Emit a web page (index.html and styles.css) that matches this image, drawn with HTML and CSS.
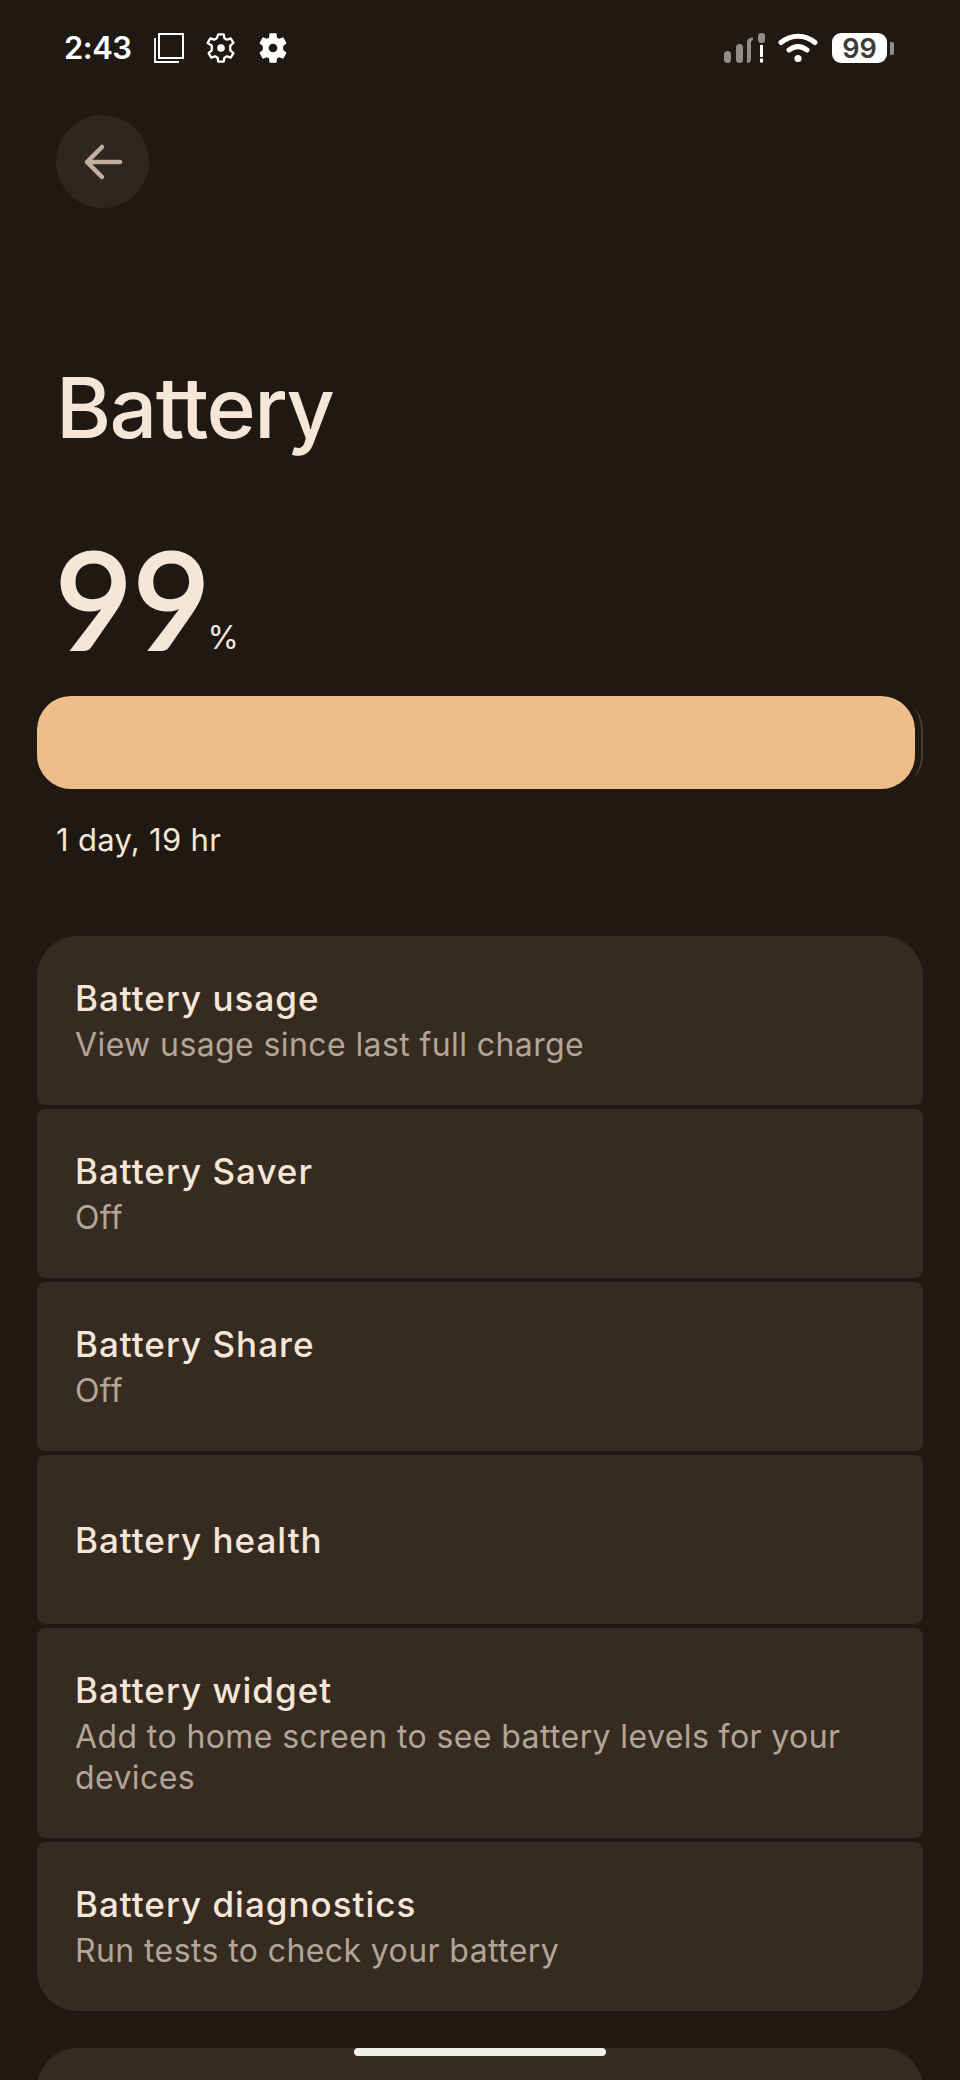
FILE: index.html
```html
<!DOCTYPE html>
<html lang="en">
<head>
<meta charset="utf-8">
<title>Battery</title>
<link rel="stylesheet" href="styles.css">
</head>
<body>
<div class="screen">
  <header class="status">
    <div class="status-left">
      <span class="time">2:43</span>
      <svg class="ic" width="30" height="30" viewBox="0 0 30 30" fill="none" stroke="#fff" stroke-width="2"><rect x="5" y="1" width="24" height="24"/><path d="M1 5v24h24" stroke-width="1.8"/></svg>
      <svg class="ic" width="30" height="30" viewBox="1 1 22 22"><path fill="none" stroke="#fff" stroke-width="1.700" stroke-linejoin="round" d="M10 2h4l.5 2.900 1.800 1 2.800-1 2 3.400-2.300 1.900v3.600l2.300 1.900-2 3.400-2.800-1-1.800 1-.5 2.900h-4l-.5-2.900-1.800-1-2.800 1-2-3.400 2.300-1.900v-3.600L2.200 8.300l2-3.400 2.800 1 1.800-1z"/><circle cx="12" cy="12" r="2.800" fill="#fff"/></svg>
      <svg class="ic" width="30" height="30" viewBox="1 1 22 22"><path fill="#fff" fill-rule="evenodd" d="M9.500 1.200h5l.5 3.200 1.500.9 3-1.100 2.500 4.300-2.500 2v3l2.500 2-2.500 4.300-3-1.100-1.500.9-.5 3.200h-5l-.5-3.200-1.500-.9-3 1.100-2.500-4.300 2.500-2v-3l-2.500-2 2.500-4.300 3 1.100 1.500-.9zM12 8.800a3.200 3.200 0 1 0 0 6.400 3.200 3.200 0 0 0 0-6.400z"/></svg>
    </div>
    <div class="status-right">
      <svg class="signal" width="42" height="31" viewBox="0 0 42 31"><g fill="#8f8d88"><rect x="0" y="18" width="7" height="12" rx="3.500"/><rect x="12" y="11" width="7" height="19" rx="3.500"/><path d="M23 27V9c0-3 2-4.500 6-4.500v2.500c-1.500.5-2 1.500-2 3v16c0 2.500-1 4-4 4z"/><rect x="34" y="0" width="7" height="10" rx="3"/></g><rect x="36" y="12" width="3" height="12" fill="#fff"/><rect x="36" y="25.500" width="3" height="4" fill="#fff"/></svg>
      <svg class="wifi" width="40" height="30" viewBox="0 0 40 30" fill="none" stroke="#fff" stroke-width="5" stroke-linecap="round"><path d="M3 9.500c10-8.500 24-8.500 34 0"/><path d="M11 17c6-4.500 12-4.500 18 0"/><circle cx="20" cy="25.500" r="3.600" fill="#fff" stroke="none"/></svg>
      <div class="batt"><span class="batt-num">99</span></div>
      <span class="batt-cap"></span>
    </div>
  </header>

  <button class="back" aria-label="Back">
    <svg width="44" height="44" viewBox="0 0 44 44" fill="none" stroke="#c4aea2" stroke-width="4.500" stroke-linecap="round" stroke-linejoin="round"><path d="M39 22H6M21 7 6 22l15 15"/></svg>
  </button>

  <h1 class="title">Battery</h1>

  <div class="level"><span class="num">99</span><span class="pct">%</span></div>

  <div class="bar"><div class="fill"></div></div>

  <p class="remain">1 day, 19 hr</p>

  <div class="list">
    <div class="item first"><div class="name">Battery usage</div><div class="sub">View usage since last full charge</div></div>
    <div class="item"><div class="name">Battery Saver</div><div class="sub">Off</div></div>
    <div class="item"><div class="name">Battery Share</div><div class="sub">Off</div></div>
    <div class="item"><div class="name">Battery health</div></div>
    <div class="item"><div class="name">Battery widget</div><div class="sub">Add to home screen to see battery levels for your devices</div></div>
    <div class="item last"><div class="name">Battery diagnostics</div><div class="sub">Run tests to check your battery</div></div>
  </div>

  <div class="next"></div>
  <div class="handle"></div>
</div>
</body>
</html>
```
FILE: styles.css
```css
* { box-sizing: border-box; }
html, body { margin: 0; padding: 0; background: #1f1813; }
body { font-family: Inter, "Open Sans", sans-serif; }
.screen { position: relative; width: 960px; height: 2080px; overflow: hidden; background: #1f1813; }
.status { height: 96px; padding: 30px 66px 0 64px; display: flex; justify-content: space-between; align-items: flex-start; color: #fff; }
.status-left { display: flex; align-items: center; gap: 22px; height: 36px; }
.time { font-family: Inter, sans-serif; font-weight: 600; font-size: 31px; line-height: 36px; width: 68px; letter-spacing: -.5px; }
.ic { display: block; }
.status-right { display: flex; align-items: center; height: 36px; }
.signal { margin-top: 1px; }
.wifi { margin-left: 12px; }
.batt { margin-left: 14px; width: 55px; height: 30px; border-radius: 9px; background: #fff; display: flex; align-items: center; justify-content: center; }
.batt-num { font-family: Inter, sans-serif; font-weight: 600; font-size: 27px; color: #3d3b38; }
.batt-cap { margin-left: 3px; width: 4px; height: 13px; background: #8f8d88; border-radius: 0 2px 2px 0; }
.back { display: flex; align-items: center; justify-content: center; margin: 19px 0 0 56px; width: 93px; height: 93px; border: 0; border-radius: 50%; background: #2f261d; padding: 0; }
.title { margin: 148px 0 0 56px; font-family: Inter, sans-serif; font-weight: 500; font-size: 84px; line-height: 104px; letter-spacing: -1.600px; color: #f6e6d8; }
.level { margin: 70px 0 0 55px; display: flex; align-items: baseline; color: #f6e6d8; }
.num { font-family: Lato, sans-serif; font-size: 134px; line-height: 136px; font-weight: 400; -webkit-text-stroke: 3px #f6e6d8; }
.pct { font-family: Inter, sans-serif; font-size: 32px; margin-left: -3px; }
.bar { margin: 30px 0 0 37px; width: 886px; height: 93px; border-radius: 34px; background: #4d3e2b; }
.fill { width: 878px; height: 93px; border-radius: 34px; background: #eebe8a; box-shadow: 0 0 0 6px #1f1813; }
.remain { margin: 31px 0 0 56px; font-size: 31px; line-height: 40px; letter-spacing: .3px; color: #f6e6d8; }
.list { margin: 76px 37px 0 37px; display: flex; flex-direction: column; gap: 4px; }
.item { min-height: 169px; padding: 40px 38px; border-radius: 8px; background: #352b21; display: flex; flex-direction: column; justify-content: center; }
.item.first { border-radius: 40px 40px 8px 8px; }
.item.last { border-radius: 8px 8px 40px 40px; }
.name { font-weight: 500; font-size: 35px; line-height: 44px; letter-spacing: 1px; color: #f6e6d8; }
.sub { margin-top: 4px; font-size: 32px; line-height: 41px; letter-spacing: .4px; color: #b3a597; }
.next { margin: 37px 37px 0 37px; height: 120px; border-radius: 40px 40px 0 0; background: #352b21; }
.handle { position: absolute; left: 354px; top: 2048px; width: 252px; height: 8px; border-radius: 4px; background: #f0efeb; }
```
